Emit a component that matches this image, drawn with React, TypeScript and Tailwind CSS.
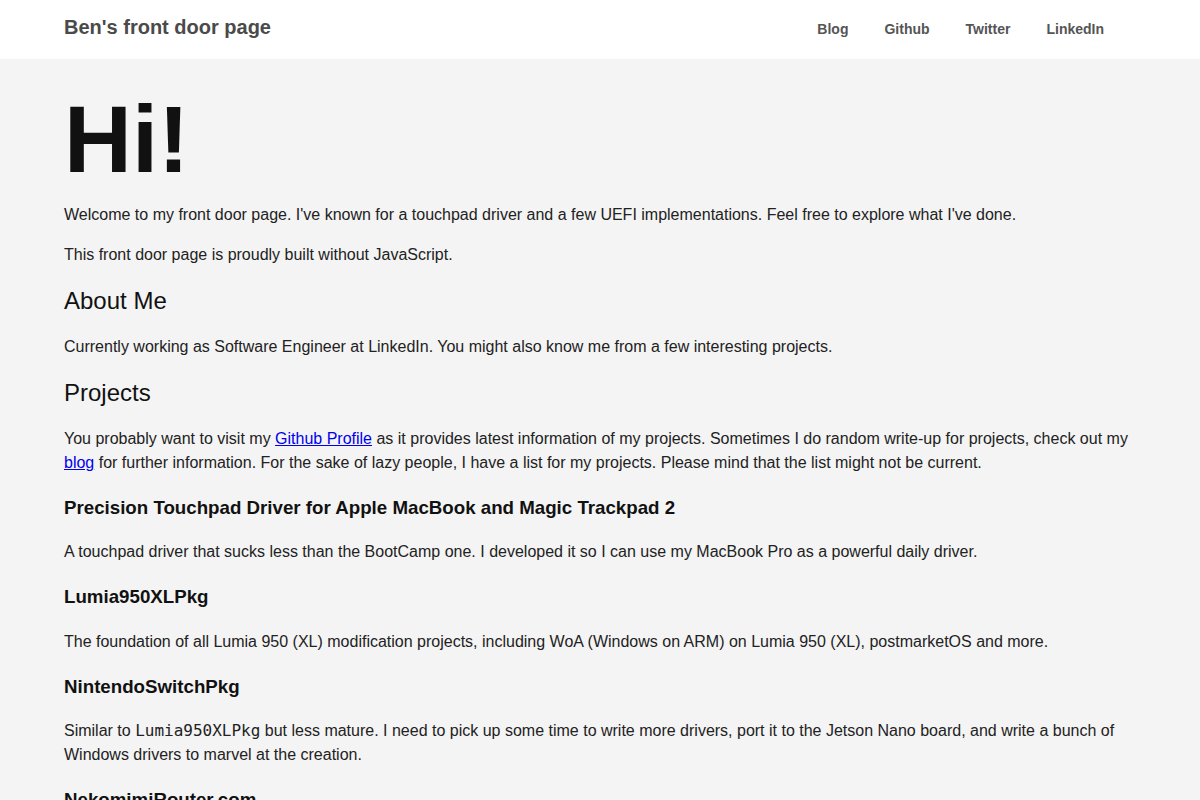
export default function App() {
  const body = { fontFamily: '"Liberation Sans", Arial, sans-serif' };
  const mono = { fontFamily: '"DejaVu Sans Mono", monospace' };
  return (
    <div className="min-h-[800px] bg-[#f4f4f4] text-[#222] text-[16px] leading-[24px]" style={body}>
      <header className="h-[59px] bg-white flex items-center px-16">
        <a href="#" className="text-[20px] font-bold text-[#4a4a4a] leading-[28px] -mt-[6px]">
          Ben's front door page
        </a>
        <nav className="ml-auto mr-8 flex gap-[36px] text-[14px] font-bold text-[#555] leading-[20px] mb-[2px]">
          <a href="#" className="-ml-[1px]">Blog</a>
          <a href="#">Github</a>
          <a href="#">Twitter</a>
          <a href="#">LinkedIn</a>
        </nav>
      </header>

      <main className="px-16">
        <h1 className="text-[94px] font-bold leading-none text-[#111] pt-[34px] mb-4">Hi!</h1>
        <p className="mb-4">
          Welcome to my front door page. I've known for a touchpad driver and a few UEFI implementations. Feel free to
          explore what I've done.
        </p>
        <p className="mb-4">This front door page is proudly built without JavaScript.</p>

        <h2 className="text-[24px] leading-[36px] text-[#111] my-4">About Me</h2>
        <p className="mb-4">
          Currently working as Software Engineer at LinkedIn. You might also know me from a few interesting projects.
        </p>

        <h2 className="text-[24px] leading-[36px] text-[#111] my-4">Projects</h2>
        <p>
          You probably want to visit my{" "}
          <a href="#" className="text-[#0000ee] underline">
            Github Profile
          </a>{" "}
          as it provides latest information of my projects. Sometimes I do random write-up for projects, check out my{" "}
          <a href="#" className="text-[#0000ee] underline">
            blog
          </a>{" "}
          for further information. For the sake of lazy people, I have a list for my projects. Please mind that the list
          might not be current.
        </p>

        <h3 className="text-[18.72px] leading-[28px] font-bold text-[#111] my-[18.72px]">
          Precision Touchpad Driver for Apple MacBook and Magic Trackpad 2
        </h3>
        <p>
          A touchpad driver that sucks less than the BootCamp one. I developed it so I can use my MacBook Pro as a
          powerful daily driver.
        </p>

        <h3 className="text-[18.72px] leading-[28px] font-bold text-[#111] my-[18.72px]">Lumia950XLPkg</h3>
        <p>
          The foundation of all Lumia 950 (XL) modification projects, including WoA (Windows on ARM) on Lumia 950 (XL),
          postmarketOS and more.
        </p>

        <h3 className="text-[18.72px] leading-[28px] font-bold text-[#111] my-[18.72px]">NintendoSwitchPkg</h3>
        <p>
          Similar to <code style={mono}>Lumia950XLPkg</code> but less mature. I need to pick up some time to write more
          drivers, port it to the Jetson Nano board, and write a bunch of Windows drivers to marvel at the creation.
        </p>

        <h3 className="text-[18.72px] leading-[28px] font-bold text-[#111] my-[18.72px]">NekomimiRouter.com</h3>
        <p className="pb-8">A personal network and infrastructure playground.</p>
      </main>
    </div>
  );
}
